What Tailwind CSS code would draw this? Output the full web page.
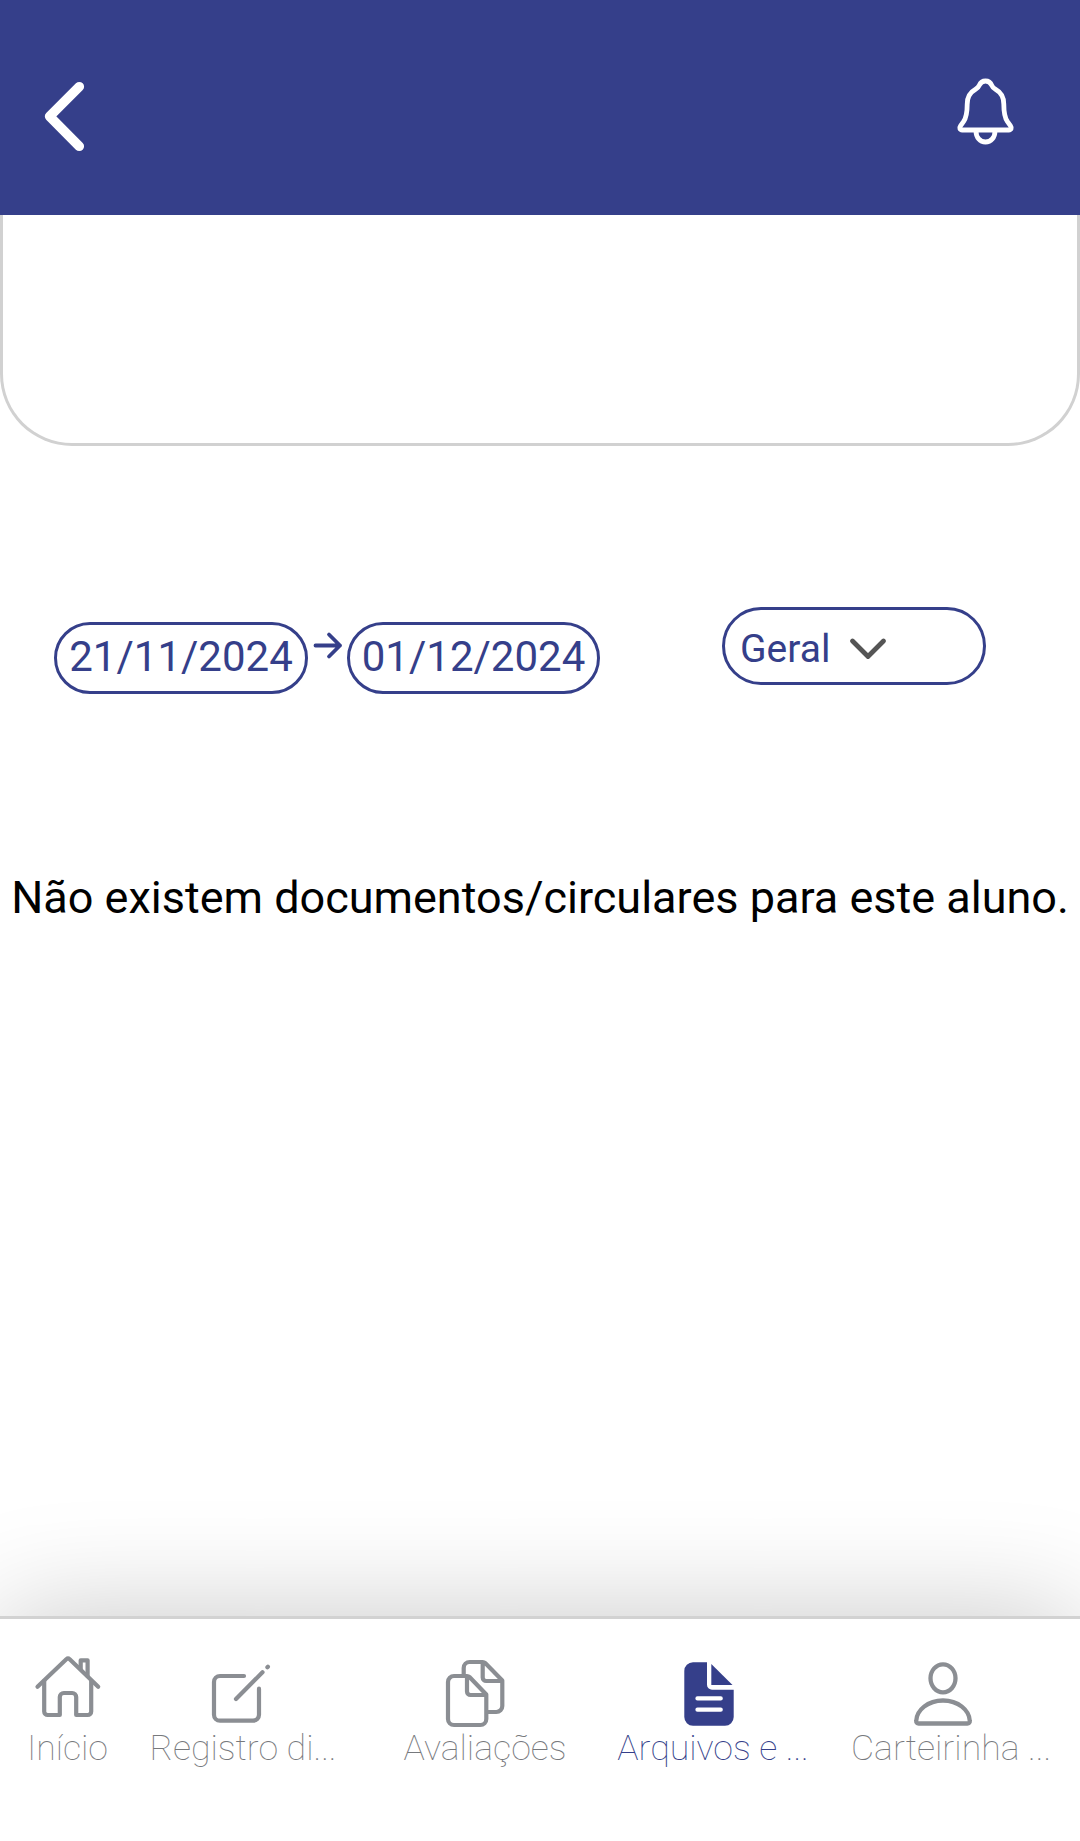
<!DOCTYPE html>
<html lang="pt">
	<head>
		<meta charset="UTF-8" />
		<meta name="viewport" content="width=device-width, initial-scale=1" />
		<title>Arquivos e circulares</title>
		<script src="https://cdn.jsdelivr.net/npm/@tailwindcss/browser@4"></script>
	</head>
	<body class="bg-white font-[Roboto,sans-serif]">
		<div class="flex h-[1841px] w-[1080px] flex-col overflow-hidden">
			<header class="flex h-[215px] shrink-0 items-start justify-between bg-[#353f8a] pt-[70px] pr-[58px] pl-10">
				<button type="button" aria-label="Voltar">
					<svg class="block h-[92px] w-[50px]" viewBox="0 0 50 92" fill="none" stroke="#fff" stroke-width="9.6" stroke-linecap="round" stroke-linejoin="round">
						<path d="M39.3 16.7 9.6 46.3l29.7 30" />
					</svg>
				</button>
				<button type="button" aria-label="Notificações">
					<svg class="block h-20 w-[72px]" viewBox="0 0 72 80" fill="none" stroke="#fff" stroke-width="4.8" stroke-linejoin="round">
						<path d="M35.5 11c-3.400 0-5.200 1.900-6.100 4.200-.8 2-1.800 3-4 4.200-5.300 2.900-8.200 7.500-8.200 14.800 0 8.500-.7 13.200-3.700 17.500l-3 4.100c-1.500 2.100-.7 4.200 1.700 4.200h46.600c2.400 0 3.200-2.100 1.700-4.200l-3-4.100c-3-4.300-3.700-9-3.700-17.500 0-7.300-2.900-11.900-8.200-14.800-2.200-1.200-3.200-2.200-4-4.200-.9-2.300-2.700-4.200-6.100-4.200Z" />
						<path d="M26 61c0 6.500 4 11 9.500 11s9.500-4.500 9.500-11" />
					</svg>
				</button>
			</header>

			<section class="h-[231px] shrink-0 rounded-b-[72px] border-x-3 border-b-3 border-[#d1d1d1]"></section>

			<!-- Filters -->
			<div class="mt-[161px] flex items-start pl-[54px] text-[#353f8a]">
				<div class="mt-[15px] flex h-[72px] w-[254px] items-center justify-center rounded-full border-3 border-[#353f8a] pb-1 text-[42px] whitespace-nowrap">21/11/2024</div>
				<svg class="mt-[21px] h-10 w-[39px]" viewBox="0 0 39 40" fill="none" stroke="currentColor" stroke-width="3.8" stroke-linecap="round" stroke-linejoin="round">
					<path d="M7.500 17.500h24.500M21 6.500l11 11-11 11" />
				</svg>
				<div class="mt-[15px] flex h-[72px] w-[253px] items-center justify-center rounded-full border-3 border-[#353f8a] pb-1 text-[42px] whitespace-nowrap">01/12/2024</div>
				<div class="ml-[122px] flex h-[78px] w-[264px] items-center rounded-full border-3 border-[#353f8a] pl-[15px] text-[39px]">
					<span class="w-[90px] pt-1.5">Geral</span>
					<svg class="ml-[18px] h-[30px] w-[40px]" viewBox="0 0 40 30" fill="none" stroke="#555" stroke-width="4.800" stroke-linecap="round" stroke-linejoin="round">
						<path d="M4.500 10 20 25.500 35.500 10" />
					</svg>
				</div>
			</div>

			<p class="mt-[170px] text-center text-[45px] whitespace-nowrap text-black">Não existem documentos/circulares para este aluno.</p>

			<!-- Bottom tabs -->
			<nav class="mt-auto flex h-[225px] shrink-0 border-t-3 border-[#d2d2d2] bg-white pt-[31px] pl-[15px] text-[35.7px] leading-9 font-thin whitespace-nowrap text-[#77797d] shadow-[0_0_115px_rgba(0,0,0,0.22)]">
				<a class="flex w-[105px] flex-col items-center">
					<svg class="h-20 w-20 shrink-0" viewBox="0 0 80 80" fill="none" stroke="#8b8e93" stroke-width="4.200" stroke-linecap="round" stroke-linejoin="round">
						<path d="M9.500 36.700 38.300 9.200q1.700-1.500 3.400 0l28.500 27.500" />
						<path d="M16.200 31v30.500a3.500 3.500 0 0 0 3.500 3.500h12.100V47a4 4 0 0 1 4-4h8.400a4 4 0 0 1 4 4v18h11.500a3.500 3.500 0 0 0 3.500-3.500V31" />
						<path d="M52.700 19v-8.700h6.900V26" />
					</svg>
					<span>Início</span>
				</a>
				<a class="flex w-[246px] flex-col items-center">
					<svg class="h-20 w-20 shrink-0" viewBox="0 0 80 80" fill="none" stroke="#8b8e93" stroke-width="4.200" stroke-linecap="round" stroke-linejoin="round">
						<path d="M41 26H17a6 6 0 0 0-6 6v32.700a6 6 0 0 0 6 6h33a6 6 0 0 0 6-6v-26" />
						<path d="M33 49 59.500 22.300M64.400 17.300l.5-.5" />
					</svg>
					<span>Registro di...</span>
				</a>
				<a class="flex w-[238px] flex-col items-center">
					<svg class="h-20 w-20 shrink-0" viewBox="0 0 80 80" fill="none" stroke="#8b8e93" stroke-width="4.200" stroke-linejoin="round">
						<path d="M22 26H9a6 6 0 0 0-6 6v37a6 6 0 0 0 6 6h26.300a6 6 0 0 0 6-6V44.500L24.500 27q-1-1-2.500-1v15.500a3.500 3.500 0 0 0 3.500 3.500h15.800" />
						<path d="M18.700 25v-7a6 6 0 0 1 6-6h13q1.500 0 2.500 1l17.100 17.500V56a6 6 0 0 1-6 6h-8.500M37.700 12v15.500a3.500 3.500 0 0 0 3.500 3.500h16" />
					</svg>
					<span>Avaliações</span>
				</a>
				<a class="flex w-[218px] flex-col items-center text-[#353f8a]">
					<svg class="h-20 w-20 shrink-0" viewBox="0 0 80 80">
						<path fill="#353f8a" d="M20 12.300h14v22.400a5 5 0 0 0 5 5h21.700v27.300a8.700 8.700 0 0 1-8.700 8.700H20a8.700 8.700 0 0 1-8.700-8.700V21a8.700 8.700 0 0 1 8.700-8.700Z" />
						<path fill="#353f8a" d="M38.300 14v20.900h21.200Z" />
						<path stroke="#fff" stroke-width="4.300" stroke-linecap="round" d="M24.500 48.400h23.200M24.500 59.700h23.200" />
					</svg>
					<span>Arquivos e ...</span>
				</a>
				<a class="flex w-[258px] flex-col items-center">
					<svg class="h-20 w-20 shrink-0" viewBox="0 0 80 80" fill="none" stroke="#8b8e93" stroke-width="4.300" stroke-linejoin="round">
						<ellipse cx="32" cy="28.300" rx="12.500" ry="14" />
						<path d="M32 50.500C17 50.500 5.500 60 5.200 71c-.1 1.600.8 2.500 2.400 2.500h48.800c1.600 0 2.500-.9 2.400-2.500C58.500 60 47 50.500 32 50.500Z" />
					</svg>
					<span>Carteirinha ...</span>
				</a>
			</nav>
		</div>
	</body>
</html>
